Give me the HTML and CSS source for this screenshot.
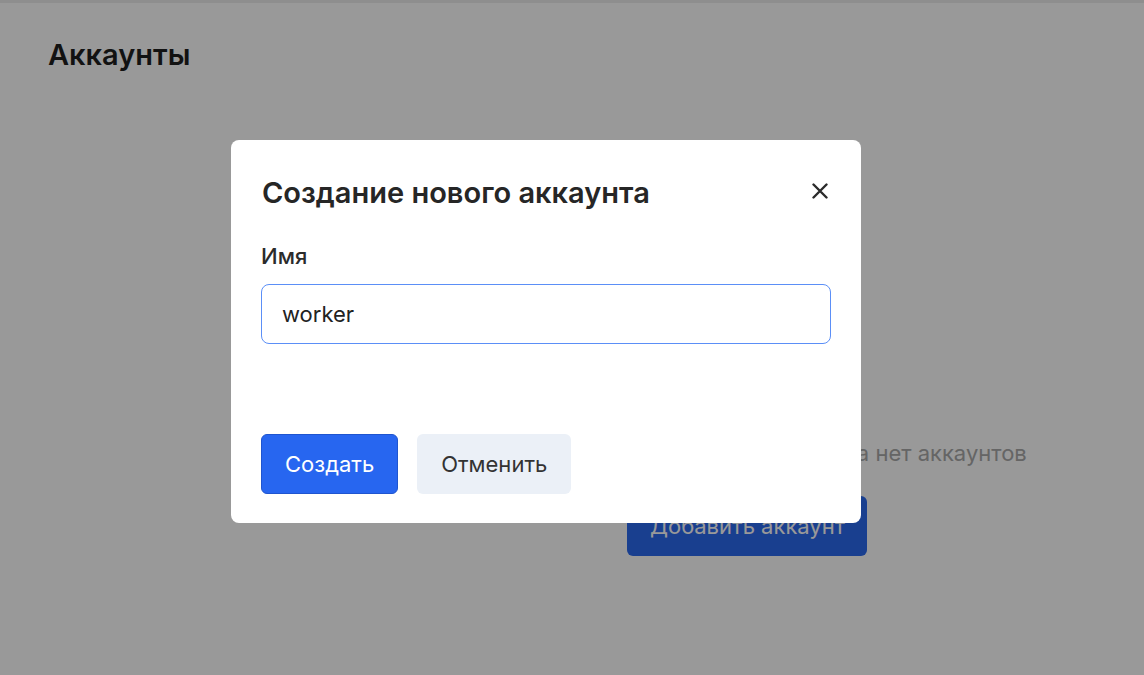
FILE: index.html
```html
<!DOCTYPE html>
<html lang="ru">

<head>
    <meta charset="UTF-8">
    <meta name="viewport" content="width=device-width, initial-scale=1.0">
    <title>Аккаунты</title>
    <link rel="stylesheet" href="styles.css">
</head>

<body>
    <div class="topline"></div>
    <main class="page">
        <h1 class="page-title">Аккаунты</h1>
        <div class="empty">
            <p class="empty-text">У этого пользователя пока нет аккаунтов</p>
            <button class="btn btn-primary btn-add">Добавить аккаунт</button>
        </div>
    </main>

    <div class="overlay">
        <div class="modal">
            <div class="modal-header">
                <h2 class="modal-title">Создание нового аккаунта</h2>
                <button class="modal-close" aria-label="Закрыть">
                    <svg width="16" height="16" viewBox="0 0 16 16">
                        <path d="M1.5 1.5L14.5 14.5M14.5 1.5L1.5 14.5" stroke="#2b2b2b" stroke-width="2.4" stroke-linecap="round" />
                    </svg>
                </button>
            </div>
            <div class="form-group">
                <label for="name">Имя</label>
                <input type="text" id="name" name="name" value="worker">
            </div>
            <div class="modal-actions">
                <button class="btn btn-primary">Создать</button>
                <button class="btn btn-secondary">Отменить</button>
            </div>
        </div>
    </div>
</body>

</html>
```

FILE: styles.css
```css
body {
    margin: 0;
    font-family: Inter, "Noto Sans", sans-serif;
    background-color: #fff;
    color: #1f1f1f;
    height: 675px;
    overflow: hidden;
}

.topline {
    height: 3px;
    background-color: #ededed;
}

.page {
    padding: 0 48px;
}

.page-title {
    margin: 0;
    padding-top: 35px;
    font-size: 29px;
    font-weight: 600;
    line-height: 34px;
}

.empty {
    display: flex;
    flex-direction: column;
    align-items: flex-start;
    padding-left: 533px;
    padding-top: 368px;
}

.empty-text {
    margin: 0 0 30px;
    font-size: 22px;
    color: #a8a8a8;
    line-height: 26px;
    white-space: nowrap;
}

.btn {
    font-family: inherit;
    font-size: 22px;
    border: none;
    border-radius: 6px;
    height: 60px;
    padding: 0 23px;
    white-space: nowrap;
    cursor: pointer;
}

.btn-primary {
    background-color: #2766f0;
    color: #fff;
    border: 1px solid #1f55cf;
}

.btn-secondary {
    background-color: #ebf0f7;
    color: #333;
    padding: 0 24px;
}

.btn-add {
    width: 240px;
    margin-left: 46px;
    border: none;
    background-color: #2b69ee;
}

.overlay {
    position: fixed;
    inset: 0;
    background-color: rgba(0, 0, 0, 0.4);
    display: flex;
    justify-content: flex-start;
    padding-top: 140px;
    padding-left: 231px;
}

.modal {
    box-sizing: border-box;
    width: 630px;
    height: 383px;
    background-color: #fff;
    border-radius: 8px;
    padding: 30px 30px 0;
    display: flex;
    flex-direction: column;
    align-self: flex-start;
}

.modal-header {
    display: flex;
    justify-content: space-between;
    align-items: center;
    height: 44px;
}

.modal-title {
    margin: 0;
    padding-left: 1px;
    font-size: 29px;
    font-weight: 600;
    color: #262626;
}

.modal-close {
    background: none;
    border: none;
    padding: 0;
    margin-right: 3px;
    margin-top: -2px;
    width: 16px;
    height: 16px;
    display: flex;
    cursor: pointer;
}

.form-group {
    margin-top: 29px;
}

label {
    display: block;
    font-size: 22px;
    font-weight: 500;
    color: #2b2b2b;
    margin-bottom: 15px;
    line-height: 26px;
}

input[type="text"] {
    box-sizing: border-box;
    width: 570px;
    height: 60px;
    padding: 0 20px;
    font-family: inherit;
    font-size: 22px;
    color: #222;
    border: 1px solid #5b8ff7;
    border-radius: 8px;
    outline: none;
}

.modal-actions {
    display: flex;
    gap: 19px;
    margin-top: 90px;
}
```
